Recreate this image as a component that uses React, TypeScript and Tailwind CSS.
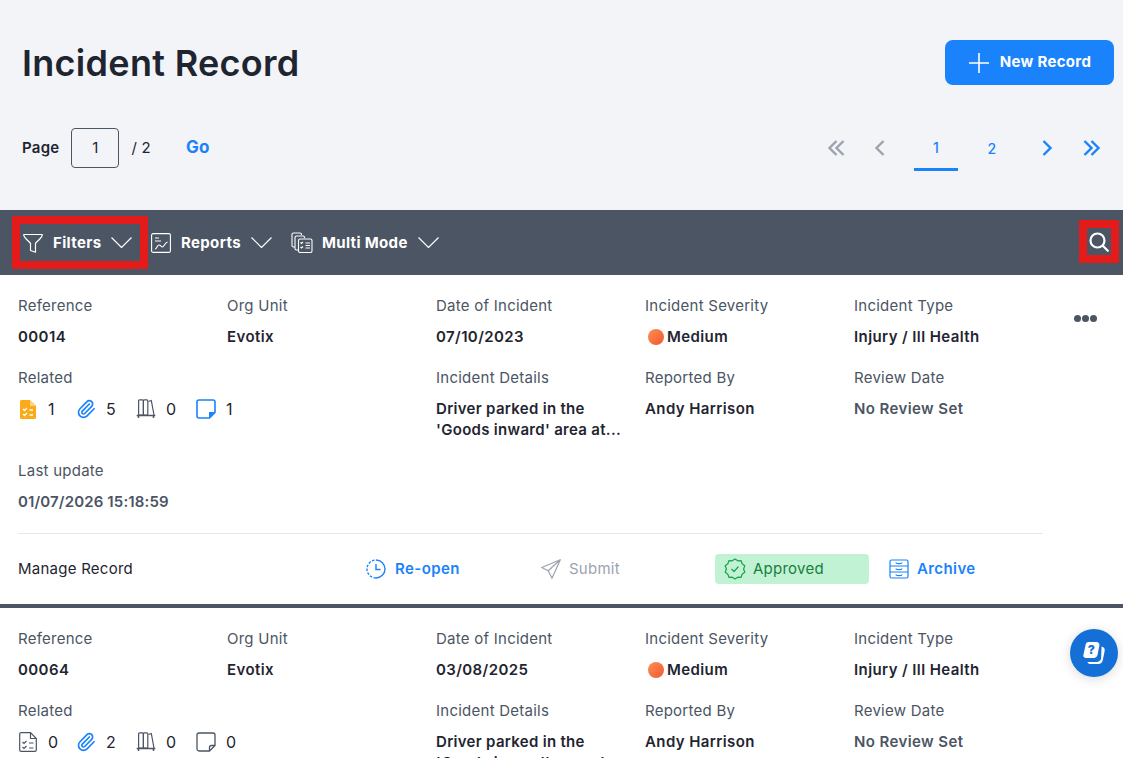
import { FC, ReactNode } from "react";
import { Paperclip } from "lucide-react";

const Funnel = () => (
    <svg width="20" height="20" viewBox="0 0 20 20" fill="none" stroke="currentColor" strokeWidth="1.2" strokeLinejoin="round">
        <path d="M.7 1.500h18.600c.3 2-1.500 3.500-3 5l-3.800 3.700v9l-5-1.700v-7.300L3.700 6.500C2.200 5 .4 3.500.7 1.500z" />
    </svg>
);

const ReportIcon = () => (
    <svg width="20" height="20" viewBox="0 0 20 20" fill="none" stroke="currentColor" strokeWidth="1.100">
        <rect x=".6" y=".6" width="18.800" height="18.800" rx="1.500" />
        <path d="M4 5h4M4 8h6M4 16c2 0 2-4 4-4s2 2 3.500 2 2-4 5-5" />
    </svg>
);

const MultiIcon = () => (
    <svg width="22" height="21" viewBox="0 0 22 21" fill="none" stroke="currentColor" strokeWidth="1.100">
        <path d="M4 15H2.500A1.500 1.500 0 0 1 1 13.500V2.500A1.500 1.500 0 0 1 2.500 1H9a1.500 1.500 0 0 1 1.500 1.500V3" />
        <path d="M7 18H5.500A1.500 1.500 0 0 1 4 16.500V5.500A1.500 1.500 0 0 1 5.500 4H12a1.500 1.500 0 0 1 1.500 1.500V6" />
        <rect x="7.500" y="7" width="13.500" height="13.500" rx="1.500" />
        <path d="M9.500 10.500l1 1 1.500-1.500M9.500 15l1 1 1.500-1.500M14.500 11h4.500M14.500 13.500h4.500M14.500 16h4.500" />
    </svg>
);

const Caret = () => (
    <svg width="21" height="11" viewBox="0 0 21 11" fill="none" stroke="currentColor" strokeWidth="1.200" className="shrink-0">
        <path d="M.5.500l10 10 10-10" />
    </svg>
);

const SearchIcon = () => (
    <svg width="20" height="20" viewBox="0 0 20 20" fill="none" stroke="currentColor" strokeWidth="2.200" strokeLinecap="round" className="shrink-0">
        <circle cx="8.500" cy="8.500" r="7" />
        <path d="M13.800 13.800l5 5" />
    </svg>
);

const PageArrow: FC<{ dir: "left" | "right"; double?: boolean; className: string }> = ({ dir, double, className }) => (
    <svg
        width={double ? 18 : 12}
        height="18"
        viewBox={double ? "0 0 18 18" : "0 0 12 18"}
        fill="none"
        stroke="currentColor"
        strokeWidth="2.400"
        className={className + (dir === "right" ? " -scale-x-100" : "")}
    >
        <path d="M9.500 2L2.500 9l7 7" />
        {double && <path d="M16.500 2L9.500 9l7 7" />}
    </svg>
);

const TaskIcon = ({ filled }: { filled: boolean }) =>
    filled ? (
        <svg width="16" height="19" viewBox="0 0 16 19">
            <path d="M1.500 0H10l6 6v11.500a1.500 1.500 0 0 1-1.500 1.500h-13A1.500 1.500 0 0 1 0 17.500v-16A1.500 1.500 0 0 1 1.500 0z" fill="#fbab18" />
            <path d="M10 0v6h6" fill="#fdd27e" />
            <path d="M3 9l1.500 1.500L7 8M3 14l1.500 1.500L7 13M9.500 10H13M9.500 15H13" fill="none" stroke="#fff" strokeWidth="1.300" />
        </svg>
    ) : (
        <svg width="18" height="20" viewBox="0 0 18 20" fill="none" stroke="#4b5563" strokeWidth="1.200">
            <path d="M2 .7h9.500l5.800 5.800V18a1.300 1.300 0 0 1-1.300 1.300H2A1.300 1.300 0 0 1 .7 18V2A1.300 1.300 0 0 1 2 .7z" />
            <path d="M11.500.7v5.800h5.800M3.500 10l1.500 1.500L7.500 9M3.500 15l1.500 1.500L7.500 14M10 11h4.500M10 16h4.500" />
        </svg>
    );

const BooksIcon = () => (
    <svg width="20" height="20" viewBox="0 0 20 20" fill="none" stroke="#4b5563" strokeWidth="1.200">
        <rect x="2.600" y=".8" width="4.800" height="15.200" rx="1" />
        <rect x="7.400" y=".8" width="4.400" height="15.200" rx="1" />
        <path d="M12.500 2.500l2.800-1 2.700 14.500" />
        <path d="M.7 16.500h18.600M2.500 16.500v2.500M17.500 16.500v2.500" strokeWidth="1.500" />
    </svg>
);

const NoteIcon = ({ active }: { active: boolean }) =>
    active ? (
        <svg width="20" height="20" viewBox="0 0 20 20" fill="none">
            <path d="M3 1h14a2 2 0 0 1 2 2v10.500L13.500 19H3a2 2 0 0 1-2-2V3a2 2 0 0 1 2-2z" stroke="#1a82fb" strokeWidth="1.600" />
            <path d="M19 13h-6v6z" fill="#1a82fb" />
        </svg>
    ) : (
        <svg width="20" height="20" viewBox="0 0 20 20" fill="none" stroke="#4b5563" strokeWidth="1.300">
            <path d="M3 1h14a2 2 0 0 1 2 2v10.500L13.500 19H3a2 2 0 0 1-2-2V3a2 2 0 0 1 2-2z" />
            <path d="M19 13.500h-3.500a2 2 0 0 0-2 2V19" />
        </svg>
    );

const ReopenIcon = () => (
    <svg width="20" height="20" viewBox="0 0 20 20" fill="none" stroke="#1a82fb" strokeWidth="1.400">
        <path d="M10 1a9 9 0 0 1 0 18" />
        <path d="M10 19a9 9 0 0 1 0-18" strokeDasharray="2.500 1.500" />
        <path d="M10 5v5.500h4.500" />
    </svg>
);

const SendIcon = () => (
    <svg width="20" height="20" viewBox="0 0 20 20" fill="none" stroke="#9ca3af" strokeWidth="1.200" strokeLinejoin="round">
        <path d="M19.300.7L.7 8.500l6.500 3.300 3.800 7.500zM19.300.7L7.200 11.800" />
    </svg>
);

const BadgeIcon = () => (
    <svg width="22" height="22" viewBox="0 0 22 22" fill="none" stroke="#16a34a" strokeWidth="1.200" strokeLinejoin="round">
        <path d="M11 1l2.800 1.800 3.300-.2 1 3.200 2.700 2-1.200 3.200 1.200 3.200-2.700 2-1 3.200-3.300-.2L11 21l-2.800-1.800-3.300.2-1-3.200-2.700-2L2.400 11 1.200 7.800l2.700-2 1-3.200 3.300.2z" />
        <path d="M7.500 11l2.500 2.500 4.500-5" />
    </svg>
);

const CabinetIcon = () => (
    <svg width="20" height="20" viewBox="0 0 20 20" fill="none" stroke="#1a82fb" strokeWidth="1.200">
        <rect x="1" y="1" width="18" height="18" rx="1.500" />
        <path d="M1 7h18M1 13h18M7 3.500c0 1.500 6 1.500 6 0M7 9.500c0 1.500 6 1.500 6 0M7 15.500c0 1.500 6 1.500 6 0" />
    </svg>
);

const HelpIcon = () => (
    <svg width="23" height="25" viewBox="0 0 26 28">
        <path d="M21 6c3 1 4 2.500 3.500 5l-2 10c-.5 3-2.500 5-5.500 5H9c-2 0-3.500-1-4-2.500h11c2.500 0 4-1.500 4.500-4z" fill="#fff" />
        <path d="M6 1h9c2.500 0 4 1.500 3.500 4l-2 10c-.5 2.500-2 4-4.500 4H3c-2 0-3-1.500-2.500-3.500L3 4C3.300 2 4.500 1 6 1z" fill="#fff" />
        <text x="9.500" y="15" fontSize="14" fontWeight="800" fill="#1470d6" textAnchor="middle" fontFamily="Inter, sans-serif">?</text>
    </svg>
);

type FieldProps = { label: string; value: ReactNode; muted?: boolean };
const Field: FC<FieldProps> = ({ label, value, muted }) => (
    <div>
        <div className="h-[22px] leading-[22px] text-[15px] text-[#4b5563]">{label}</div>
        <div className={"mt-[9px] text-[15px] leading-[22px] font-semibold tracking-[.4px] " + (muted ? "text-[#4b5563]" : "text-[#1f2530]")}>{value}</div>
    </div>
);

type RelatedProps = { icon: ReactNode; count: number; width: string };
const Related: FC<RelatedProps> = ({ icon, count, width }) => (
    <div className={"flex items-center gap-[10px] " + width}>
        <span className="flex w-[20px] justify-center">{icon}</span>
        <span className="text-[16px] text-[#1f2530]">{count}</span>
    </div>
);

type CardProps = {
    reference: string;
    date: string;
    related: [number, number, number, number];
    lit: boolean;
};
const RecordCard: FC<CardProps> = ({ reference, date, related, lit }) => (
    <div className="relative pl-[18px] pt-[20px]">
        <div className="w-[1025px]">
            <div className="grid grid-cols-[209px_209px_209px_209px_189px] gap-y-[19px]">
                <Field label="Reference" value={reference} />
                <Field label="Org Unit" value="Evotix" />
                <Field label="Date of Incident" value={date} />
                <Field
                    label="Incident Severity"
                    value={
                        <span className="flex items-center gap-[3px] pl-[3px]">
                            <span className="h-[16px] w-[16px] rounded-full bg-gradient-to-br from-[#fb8f55] to-[#f0562f]" />
                            Medium
                        </span>
                    }
                />
                <Field label="Incident Type" value="Injury / Ill Health" />
                <div className="col-span-2">
                    <div className="h-[22px] leading-[22px] text-[15px] text-[#4b5563]">Related</div>
                    <div className="mt-[9px] flex h-[22px] items-center">
                        <Related icon={<TaskIcon filled={lit} />} count={related[0]} width="w-[58px]" />
                        <Related icon={<Paperclip size={22} strokeWidth={2} className="text-[#1a82fb]" />} count={related[1]} width="w-[60px]" />
                        <Related icon={<BooksIcon />} count={related[2]} width="w-[60px]" />
                        <Related icon={<NoteIcon active={lit} />} count={related[3]} width="w-[50px]" />
                    </div>
                </div>
                <div>
                    <div className="h-[22px] leading-[22px] text-[15px] text-[#4b5563]">Incident Details</div>
                    <div className="mt-[9px] w-[190px] text-[15px] leading-[21px] font-semibold tracking-[.3px] text-[#1f2530]">
                        Driver parked in the 'Goods inward' area at...
                    </div>
                </div>
                <Field label="Reported By" value="Andy Harrison" />
                <Field label="Review Date" value="No Review Set" muted />
            </div>
            <div className="mt-[20px]">
                <Field label="Last update" value={<span className="tracking-[.14px]">01/07/2026 15:18:59</span>} muted />
            </div>
            <div className="mt-[20px] flex h-[71px] items-center border-t border-[#e5e7eb] text-[15px]">
                <div className="mt-[1px] w-[348px] text-[#1f2530]">Manage Record</div>
                <div className="flex w-[175px] items-center gap-[9px] font-semibold tracking-[.4px] text-[#1a82fb]">
                    <ReopenIcon />
                    Re-open
                </div>
                <div className="flex w-[174px] items-center gap-[8px] text-[#9ca3af]">
                    <SendIcon />
                    Submit
                </div>
                <div className="flex h-[30px] w-[154px] items-center gap-[7px] rounded-[4px] bg-[#c2f2d4] pl-[9px] text-[#15803d]">
                    <BadgeIcon />
                    Approved
                </div>
                <div className="ml-[20px] flex items-center gap-[8px] font-semibold tracking-[.4px] text-[#1a82fb]">
                    <CabinetIcon />
                    Archive
                </div>
            </div>
        </div>
        <div className="absolute right-[26px] top-[40px] flex gap-[1px]">
            <span className="h-[7px] w-[7px] rounded-full bg-[#4b5563]" />
            <span className="h-[7px] w-[7px] rounded-full bg-[#4b5563]" />
            <span className="h-[7px] w-[7px] rounded-full bg-[#4b5563]" />
        </div>
    </div>
);

const ToolbarItem: FC<{ icon: ReactNode; label: string; gap: string }> = ({ icon, label, gap }) => (
    <div className="flex items-center text-[15px] font-bold tracking-[.35px] text-white">
        {icon}
        <span className={"mt-[1px] " + gap}>{label}</span>
        <span className="ml-[10px]">
            <Caret />
        </span>
    </div>
);

export default function App() {
    return (
        <div className="relative h-[758px] overflow-hidden bg-white font-['Inter',sans-serif] tracking-[.25px]">
            <div className="h-[210px] bg-[#f2f4f7] pl-[22px] pr-[9px] pt-[40px]">
                <div className="flex items-start justify-between">
                    <h1 className="mt-[1px] text-[36px] leading-[45px] font-semibold tracking-[.3px] text-[#1f2530]">Incident Record</h1>
                    <button className="flex h-[45px] w-[169px] items-center justify-center gap-[10px] rounded-[8px] bg-[#1a82fb] text-[15px] font-bold tracking-[.3px] text-white">
                        <svg width="22" height="22" viewBox="0 0 22 22" fill="none" stroke="currentColor" strokeWidth="1.600">
                            <path d="M11 1v20M1 11h20" />
                        </svg>
                        New Record
                    </button>
                </div>
                <div className="mt-[39px] flex items-center justify-between">
                    <div className="flex items-center text-[15px] text-[#1f2530]">
                        <span className="font-semibold">Page</span>
                        <span className="ml-[12px] flex h-[40px] w-[48px] items-center justify-center rounded-[4px] border border-[#4b5563]">1</span>
                        <span className="ml-[12px]">/ 2</span>
                        <span className="ml-[35px] text-[17px] font-bold text-[#1a82fb]">Go</span>
                    </div>
                    <div className="flex items-center pr-[13px] text-[14px] font-medium">
                        <PageArrow dir="left" double className="text-[#9ca3af]" />
                        <PageArrow dir="left" className="ml-[29px] text-[#9ca3af]" />
                        <span className="ml-[28px] mt-[2px] flex h-[44px] w-[44px] items-center justify-center border-b-[3px] border-[#1a82fb] text-[#1a82fb]">
                            1
                        </span>
                        <span className="ml-[12px] flex w-[44px] justify-center text-[#1a82fb]">2</span>
                        <PageArrow dir="right" className="ml-[27px] text-[#1a82fb]" />
                        <PageArrow dir="right" double className="ml-[30px] text-[#1a82fb]" />
                    </div>
                </div>
            </div>

            <div className="flex h-[65px] items-center justify-between bg-[#4b5563] pl-[12px] pr-[4px]">
                <div className="flex items-center">
                    <div className="flex h-[53px] w-[136px] items-center border-[8px] border-[#e31b1b] pl-[3px]">
                        <ToolbarItem icon={<Funnel />} label="Filters" gap="ml-[10px]" />
                    </div>
                    <div className="ml-[3px]">
                        <ToolbarItem icon={<ReportIcon />} label="Reports" gap="ml-[10px]" />
                    </div>
                    <div className="ml-[19px]">
                        <ToolbarItem icon={<MultiIcon />} label="Multi Mode" gap="ml-[9px]" />
                    </div>
                </div>
                <div className="mb-[2px] flex h-[43px] w-[40px] items-center justify-center border-[8px] border-[#e31b1b] text-white">
                    <SearchIcon />
                </div>
            </div>

            <RecordCard reference="00014" date="07/10/2023" related={[1, 5, 0, 1]} lit />
            <div className="h-[4px] bg-[#4b5563]" />
            <RecordCard reference="00064" date="03/08/2025" related={[0, 2, 0, 0]} lit={false} />

            <button className="absolute left-[1070px] top-[629px] flex h-[48px] w-[48px] items-center justify-center rounded-full bg-[#1470d6] shadow-[0_2px_12px_rgba(0,0,0,0.15)]">
                <HelpIcon />
            </button>
        </div>
    );
}
